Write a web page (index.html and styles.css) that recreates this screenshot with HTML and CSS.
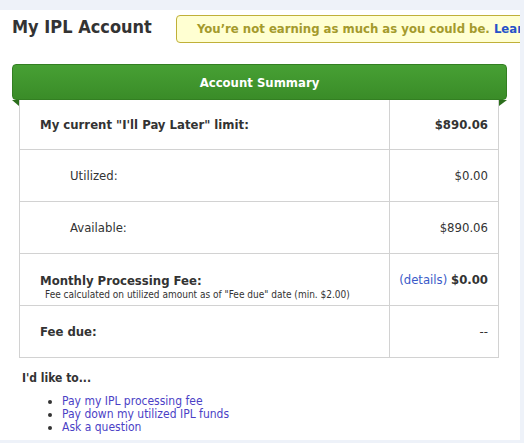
FILE: index.html
```html
<!DOCTYPE html>
<html>
<head>
<meta charset="utf-8">
<link rel="stylesheet" href="styles.css">
</head>
<body>
<div class="page">
  <div class="top">
    <h1 class="title">My IPL Account</h1>
    <div class="notice">You’re not earning as much as you could be. <a class="learn" href="#">Learn more</a></div>
  </div>
  <div class="summary">
    <div class="ribbon">Account Summary</div>
    <div class="table">
      <div class="row first">
        <div class="cell label bold">My current "I'll Pay Later" limit:</div>
        <div class="cell value bold">$890.06</div>
      </div>
      <div class="row">
        <div class="cell label indent">Utilized:</div>
        <div class="cell value">$0.00</div>
      </div>
      <div class="row">
        <div class="cell label indent">Available:</div>
        <div class="cell value">$890.06</div>
      </div>
      <div class="row">
        <div class="cell label">
          <div class="stack">
            <div class="bold">Monthly Processing Fee:</div>
            <div class="sub">Fee calculated on utilized amount as of "Fee due" date (min. $2.00)</div>
          </div>
        </div>
        <div class="cell value"><a class="details" href="#">(details)</a>&nbsp;<span class="bold">$0.00</span></div>
      </div>
      <div class="row">
        <div class="cell label bold">Fee due:</div>
        <div class="cell value">--</div>
      </div>
    </div>
  </div>
  <div class="actions">
    <div class="actions-title">I'd like to...</div>
    <ul class="links">
      <li><a href="#">Pay my IPL processing fee</a></li>
      <li><a href="#">Pay down my utilized IPL funds</a></li>
      <li><a href="#">Ask a question</a></li>
    </ul>
  </div>
</div>
</body>
</html>
```

FILE: styles.css
```css
html, body {
  margin: 0;
  padding: 0;
  background: #eef2f9;
  overflow: hidden;
}
body {
  font-family: "DejaVu Sans Condensed", "DejaVu Sans", sans-serif;
  color: #333;
  font-size: 12px;
}
.page {
  margin-top: 10px;
  width: 520px;
  height: 430px;
  background: #fff;
  overflow: hidden;
  position: relative;
}
.top {
  display: flex;
  align-items: flex-start;
  height: 54px;
}
.title {
  margin: 6px 0 0 12px;
  font-size: 18px;
  font-weight: bold;
  color: #333;
  width: 164px;
  flex: none;
  line-height: 22px;
}
.notice {
  margin-top: 5px;
  flex: none;
  height: 26px;
  line-height: 26px;
  padding: 0 40px 0 20px;
  background: #ffffd2;
  border: 1px solid #c0b038;
  border-radius: 4px;
  color: #a49a2c;
  font-weight: bold;
  font-size: 13px;
  white-space: nowrap;
}
.learn {
  color: #2752c8;
  text-decoration: none;
}
.summary {
  position: relative;
  margin-left: 12px;
  width: 495px;
}
.ribbon {
  height: 34px;
  line-height: 36px;
  background: linear-gradient(#47a034, #3a8c28);
  border: 1px solid #337f22;
  border-radius: 4px;
  color: #fff;
  font-weight: bold;
  font-size: 13px;
  text-align: center;
  box-sizing: content-box;
  width: 493px;
}
.summary::before,
.summary::after {
  content: "";
  position: absolute;
  top: 36px;
  width: 0;
  height: 0;
  border-top: 6px solid #2b6e1c;
}
.summary::before {
  left: 0;
  border-left: 7px solid transparent;
}
.summary::after {
  right: 0;
  border-right: 8px solid transparent;
}
.table {
  margin-left: 7px;
  width: 478px;
  border-left: 1px solid #d2d2d2;
  border-right: 1px solid #d2d2d2;
}
.row {
  display: flex;
  height: 51px;
  border-bottom: 1px solid #d2d2d2;
}
.row.first {
  height: 49px;
}
.cell {
  display: flex;
  align-items: center;
  font-size: 13px;
}
.label {
  width: 349px;
  padding-left: 20px;
  border-right: 1px solid #d2d2d2;
}
.label.indent {
  padding-left: 50px;
  width: 319px;
}
.value {
  flex: 1;
  justify-content: flex-end;
  padding-right: 10px;
}
.bold {
  font-weight: bold;
}
.stack {
  margin-bottom: -14px;
}
.sub {
  font-size: 10px;
  padding-left: 5px;
  line-height: 13px;
  color: #333;
}
.details {
  color: #3a5ac8;
  text-decoration: none;
}
.actions {
  padding: 12px 0 0 22px;
}
.actions-title {
  font-weight: bold;
  font-size: 12px;
  line-height: 16px;
}
.links {
  margin: 9px 0 0 0;
  padding-left: 40px;
  font-size: 12px;
  line-height: 13px;
}
.links a {
  color: #4b3fc6;
  text-decoration: none;
}
```
